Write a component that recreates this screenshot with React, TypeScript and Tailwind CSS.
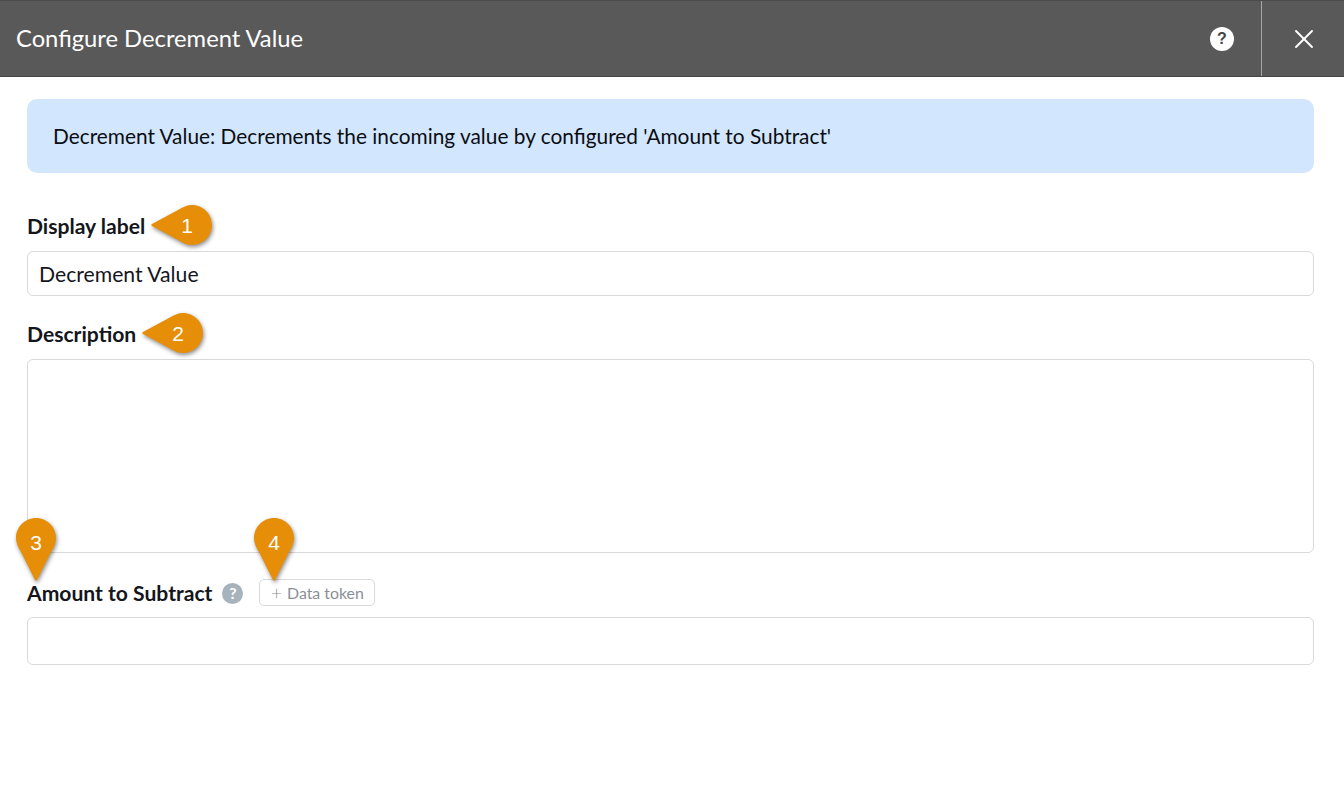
import { X } from "lucide-react"

const DownPin: React.FC<{ n: string; className: string }> = ({ n, className }) => (
  <div className={`absolute w-[40px] h-[63px] ${className}`}>
    <svg width="40" height="63" viewBox="0 0 40 63" className="drop-shadow-[1px_2px_2px_rgba(0,0,0,0.45)]">
      <path d="M20 0C31 0 40 9 40 20C40 25 38 29 35 34L21 62C20.500 63 19.500 63 19 62L5 34C2 29 0 25 0 20C0 9 9 0 20 0Z" fill="#e68e07" />
    </svg>
    <span className="absolute left-0 top-[13px] w-full text-center text-[21px] leading-[24px] text-white font-['Liberation_Sans',sans-serif]">
      {n}
    </span>
  </div>
)

const LeftPin: React.FC<{ n: string; className: string }> = ({ n, className }) => (
  <div className={`absolute w-[62px] h-[40px] ${className}`}>
    <svg width="62" height="40" viewBox="0 0 62 40" className="drop-shadow-[1px_2px_2px_rgba(0,0,0,0.45)]">
      <path d="M41 0C52 0 61 9 61 20C61 31 52 40 41 40C36 40 32 38 27 35L1 21C0 20.500 0 19.500 1 19L27 5C32 2 36 0 41 0Z" fill="#e68e07" />
    </svg>
    <span className="absolute left-[26px] top-[9px] w-[20px] text-center text-[21px] leading-[24px] text-white font-['Liberation_Sans',sans-serif]">
      {n}
    </span>
  </div>
)

const Label: React.FC<{ children: React.ReactNode }> = ({ children }) => (
  <label className="text-[21.100px] leading-[24px] font-bold text-[#14161c]">{children}</label>
)

export default function App() {
  return (
    <div className="min-h-[802px] bg-white font-['Lato',sans-serif]">
      <header className="flex h-[77px] items-center bg-[#595959] border-t border-t-[#4a4a4a] border-b border-b-[#474747]">
        <h1 className="flex-1 pl-[16px] text-[23.750px] text-white">Configure Decrement Value</h1>
        <div className="flex w-[24px] h-[24px] mr-[27px] items-center justify-center rounded-full bg-white text-[16px] font-bold text-[#444] font-['Liberation_Sans',sans-serif]">
          ?
        </div>
        <div className="flex w-[83px] h-full items-center justify-center border-l border-l-[#a6a6a6] pl-[2px]">
          <X size={32} strokeWidth={1.4} className="text-white" />
        </div>
      </header>

      <main className="pl-[27px] pr-[30px] pt-[22px]">
        <div className="flex h-[74px] items-center rounded-[10px] bg-[#d2e7fe] px-[26px] text-[20.850px] text-[#0a0d12]">
          Decrement Value: Decrements the incoming value by configured 'Amount to Subtract'
        </div>

        <div className="relative mt-[41px] h-[24px]">
          <Label>Display label</Label>
          <LeftPin n="1" className="left-[124px] top-[-9px]" />
        </div>
        <input
          readOnly
          value="Decrement Value"
          className="mt-[13px] block w-full h-[45px] rounded-[6px] border border-[#d9d9d9] px-[11px] text-[21.200px] text-[#14161c]"
        />

        <div className="relative mt-[26px] h-[24px]">
          <Label>Description</Label>
          <LeftPin n="2" className="left-[115px] top-[-9px]" />
        </div>
        <textarea
          readOnly
          className="mt-[13px] block w-full h-[194px] rounded-[6px] border border-[#d9d9d9] resize-none"
        />

        <div className="relative mt-[28px] flex h-[24px] items-center">
          <Label>Amount to Subtract</Label>
          <div className="ml-[10px] flex w-[21px] h-[21px] items-center justify-center rounded-full bg-[#a6b2bc] text-[16px] font-bold text-white">
            ?
          </div>
          <button className="ml-[16px] mb-[1px] flex h-[27px] w-[116px] items-center justify-center gap-[5px] rounded-[5px] border border-[#d9d9d9] text-[15.900px] text-[#8a8f96]">
            <span className="text-[19px] leading-none font-light">+</span>
            Data token
          </button>
          <DownPin n="3" className="left-[-11px] top-[-63px]" />
          <DownPin n="4" className="left-[227px] top-[-63px]" />
        </div>
        <input
          readOnly
          className="mt-[12px] block w-full h-[48px] rounded-[6px] border border-[#d9d9d9]"
        />
      </main>
    </div>
  )
}
